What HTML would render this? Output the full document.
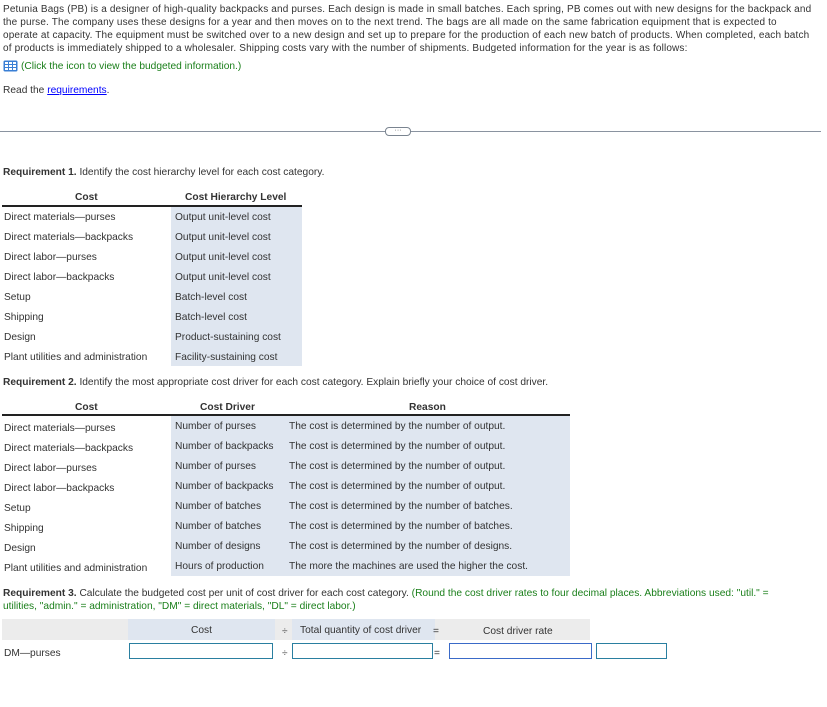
<!DOCTYPE html>
<html><head><meta charset="utf-8"><style>
body{margin:0;width:827px;height:707px;background:#fff;font-family:"Liberation Sans",Arial,sans-serif;font-size:10.2px;color:#333;position:relative;overflow:hidden}
.a{position:absolute;white-space:nowrap}
.p{position:absolute;left:3px;top:3px;line-height:13px;font-size:10px;letter-spacing:0.15px;white-space:nowrap}
.g{color:#1a7f1a}
b{font-weight:bold}
.bl{position:absolute;background:#dfe6f0}
.hl{position:absolute;height:2px;background:#222}
.in{position:absolute;height:14px;border:1px solid #2a7fa0;background:#fff}
</style></head><body>
<div class="p">Petunia Bags (PB) is a designer of high-quality backpacks and purses. Each design is made in small batches. Each spring, PB comes out with new designs for the backpack and<br>the purse. The company uses these designs for a year and then moves on to the next trend. The bags are all made on the same fabrication equipment that is expected to<br>operate at capacity. The equipment must be switched over to a new design and set up to prepare for the production of each new batch of products. When completed, each batch<br>of products is immediately shipped to a wholesaler. Shipping costs vary with the number of shipments. Budgeted information for the year is as follows:</div>
<svg class="a" style="left:3px;top:60px" width="15" height="12"><rect x="0.5" y="0.5" width="14" height="11" rx="1.5" fill="#3a7fd5"/><g fill="#fff"><rect x="2" y="2" width="3" height="2"/><rect x="6" y="2" width="3" height="2"/><rect x="10" y="2" width="3" height="2"/><rect x="2" y="5" width="3" height="2"/><rect x="6" y="5" width="3" height="2"/><rect x="10" y="5" width="3" height="2"/><rect x="2" y="8" width="3" height="2"/><rect x="6" y="8" width="3" height="2"/><rect x="10" y="8" width="3" height="2"/></g></svg>
<div class="a g" style="left:21px;top:61px">(Click the icon to view the budgeted information.)</div>
<div class="a" style="left:3px;top:85px">Read the <span style="color:#00f;text-decoration:underline">requirements</span>.</div>
<div class="a" style="left:0;top:131px;width:821px;height:1px;background:#8a93a0"></div>
<div class="a" style="left:385px;top:127px;width:24px;height:7px;border:1px solid #7a8490;border-radius:4px;background:#fff;font-size:7px;line-height:5px;text-align:center;color:#555">···</div>

<div class="a" style="left:3px;top:167px"><b>Requirement 1.</b> Identify the cost hierarchy level for each cost category.</div>
<div class="a" style="left:75px;top:192px;font-weight:bold">Cost</div>
<div class="a" style="left:185px;top:192px;font-weight:bold">Cost Hierarchy Level</div>
<div class="hl" style="left:2px;top:205px;width:300px"></div>
<div class="bl" style="left:171px;top:207px;width:131px;height:159px"></div>
<div class="a" style="left:4px;top:208px;line-height:20px">Direct materials—purses<br>Direct materials—backpacks<br>Direct labor—purses<br>Direct labor—backpacks<br>Setup<br>Shipping<br>Design<br>Plant utilities and administration</div>
<div class="a" style="left:175px;top:208px;line-height:20px">Output unit-level cost<br>Output unit-level cost<br>Output unit-level cost<br>Output unit-level cost<br>Batch-level cost<br>Batch-level cost<br>Product-sustaining cost<br>Facility-sustaining cost</div>

<div class="a" style="left:3px;top:377px"><b>Requirement 2.</b> Identify the most appropriate cost driver for each cost category. Explain briefly your choice of cost driver.</div>
<div class="a" style="left:75px;top:402px;font-weight:bold">Cost</div>
<div class="a" style="left:200px;top:402px;font-weight:bold">Cost Driver</div>
<div class="a" style="left:409px;top:402px;font-weight:bold">Reason</div>
<div class="hl" style="left:2px;top:414px;width:568px"></div>
<div class="bl" style="left:171px;top:416px;width:399px;height:160px"></div>
<div class="a" style="left:4px;top:419px;line-height:20px">Direct materials—purses<br>Direct materials—backpacks<br>Direct labor—purses<br>Direct labor—backpacks<br>Setup<br>Shipping<br>Design<br>Plant utilities and administration</div>
<div class="a" style="left:175px;top:417px;line-height:20px">Number of purses<br>Number of backpacks<br>Number of purses<br>Number of backpacks<br>Number of batches<br>Number of batches<br>Number of designs<br>Hours of production</div>
<div class="a" style="left:289px;top:417px;line-height:20px">The cost is determined by the number of output.<br>The cost is determined by the number of output.<br>The cost is determined by the number of output.<br>The cost is determined by the number of output.<br>The cost is determined by the number of batches.<br>The cost is determined by the number of batches.<br>The cost is determined by the number of designs.<br>The more the machines are used the higher the cost.</div>

<div class="a" style="left:3px;top:587px;line-height:13px"><b>Requirement 3.</b> Calculate the budgeted cost per unit of cost driver for each cost category. <span class="g">(Round the cost driver rates to four decimal places. Abbreviations used: "util." =<br>utilities, "admin." = administration, "DM" = direct materials, "DL" = direct labor.)</span></div>
<div class="a" style="left:2px;top:619px;width:588px;height:21px;background:#ececec"></div>
<div class="bl" style="left:128px;top:619px;width:147px;height:21px"></div>
<div class="bl" style="left:292px;top:619px;width:143px;height:21px"></div>
<div class="a" style="left:191px;top:625px">Cost</div>
<div class="a" style="left:282px;top:626px">÷</div>
<div class="a" style="left:300px;top:625px">Total quantity of cost driver</div>
<div class="a" style="left:433px;top:626px">=</div>
<div class="a" style="left:483px;top:626px">Cost driver rate</div>
<div class="a" style="left:4px;top:648px">DM—purses</div>
<div class="in" style="left:129px;top:643px;width:142px"></div>
<div class="a" style="left:282px;top:648px">÷</div>
<div class="in" style="left:292px;top:643px;width:139px"></div>
<div class="a" style="left:434px;top:648px">=</div>
<div class="in" style="left:449px;top:643px;width:141px;border-color:#3a6ac8"></div>
<div class="in" style="left:596px;top:643px;width:69px"></div>
</body></html>
